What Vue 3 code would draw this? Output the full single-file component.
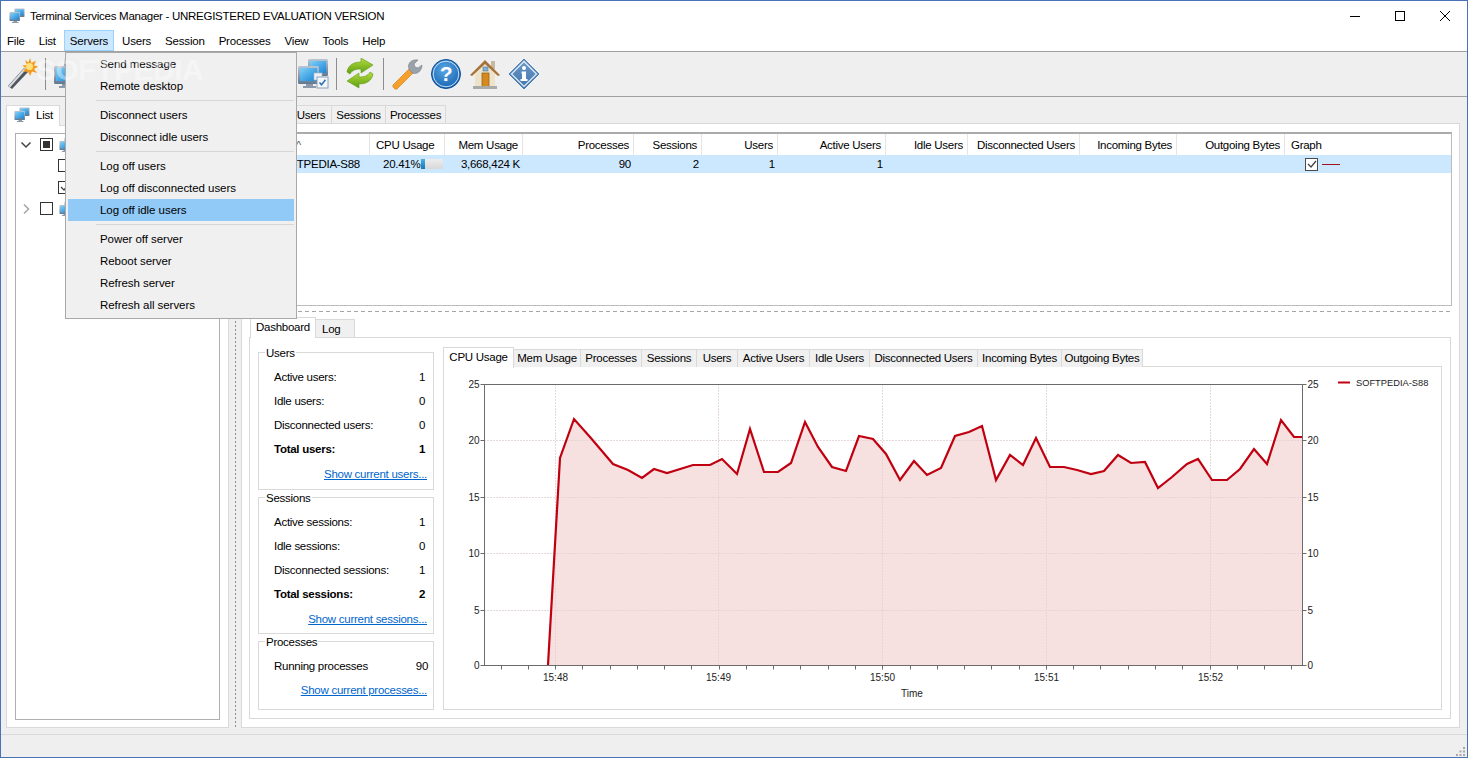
<template>
  <div class="window">
    <svg class="defs" width="0" height="0" aria-hidden="true">
      <defs>
        <linearGradient id="screen" x1="0" y1="0" x2="1" y2="1">
          <stop offset="0" stop-color="#7fd0f7" />
          <stop offset="1" stop-color="#1a86d8" />
        </linearGradient>
        <linearGradient id="bezel" x1="0" y1="0" x2="0" y2="1">
          <stop offset="0" stop-color="#b9c6d4" />
          <stop offset="1" stop-color="#62778e" />
        </linearGradient>
        <linearGradient id="green" x1="0" y1="0" x2="0" y2="1">
          <stop offset="0" stop-color="#b5dc3c" />
          <stop offset="1" stop-color="#5c9e12" />
        </linearGradient>
        <radialGradient id="blueball" cx="0.45" cy="0.35" r="0.75">
          <stop offset="0" stop-color="#5aa6e6" />
          <stop offset="1" stop-color="#0f5cab" />
        </radialGradient>
        <linearGradient id="diamond" x1="0" y1="0" x2="0" y2="1">
          <stop offset="0" stop-color="#6f9ccb" />
          <stop offset="1" stop-color="#3f74ab" />
        </linearGradient>
        <symbol id="pcs" viewBox="0 0 32 32">
          <rect x="11" y="1" width="20" height="17" rx="1.5" fill="url(#bezel)" />
          <rect x="13" y="3" width="16" height="12" fill="url(#screen)" />
          <rect x="1" y="8" width="21" height="18" rx="1.5" fill="url(#bezel)" />
          <rect x="3" y="10" width="17" height="13" fill="url(#screen)" />
          <path d="M9 26h7v2h3v2H6v-2h3z" fill="#8a9aaa" />
        </symbol>
      </defs>
    </svg>

    <header class="titlebar">
      <svg class="title-icon" width="16" height="16"><use href="#pcs" /></svg>
      <span class="title-text">Terminal Services Manager - UNREGISTERED EVALUATION VERSION</span>
      <div class="win-buttons">
        <div class="win-btn"><svg width="12" height="12"><path d="M1 6.5h10" stroke="#000" /></svg></div>
        <div class="win-btn"><svg width="12" height="12"><rect x="1.5" y="1.5" width="9" height="9" fill="none" stroke="#000" /></svg></div>
        <div class="win-btn"><svg width="12" height="12"><path d="M1 1l10 10M11 1L1 11" stroke="#000" /></svg></div>
      </div>
    </header>

    <nav class="menubar">
      <span v-for="m in menus" :key="m" class="menu-item" :class="{ open: m === 'Servers' }">{{ m }}</span>
    </nav>

    <div class="toolbar">
      <svg class="tool" width="32" height="32" viewBox="0 0 32 32">
        <path d="M2 28L18 10l4 4L6 31z" fill="#50565e" />
        <path d="M2.5 28L18 10.5l1.5 1.4L4 29.4z" fill="#d8dde2" />
        <path d="M24 0l1.500 5 4.500-2.500-2 5 4.500 1-4.500 2.500 3 4-5-1.500L24 18l-2-4.500-5 .5 3-4-4-2.500 5-.5L19 2l3.500 2.500z" fill="#f59a1c" />
        <circle cx="23.500" cy="8.500" r="3.500" fill="#ffe27a" />
      </svg>
      <span class="tool-sep"></span>
      <svg class="tool" width="32" height="32"><use href="#pcs" /></svg>
      <span class="tool-gap"></span>
      <svg class="tool" width="32" height="32" viewBox="0 0 32 32">
        <use href="#pcs" />
        <rect x="17" y="15" width="8" height="7" fill="#eef2f6" stroke="#a8b4c0" stroke-width=".6" />
        <rect x="20" y="19" width="11" height="11" fill="#f4f7fa" stroke="#8aa0b6" />
        <path d="M22.500 24.500l2 2.300 4-5" fill="none" stroke="#2a6fb5" stroke-width="1.500" />
      </svg>
      <span class="tool-sep"></span>
      <svg class="tool" width="32" height="32" viewBox="0 0 32 32">
        <path d="M3 14C4 7 10 4 17 4V0l12 7-12 8v-4c-5 0-9 1-11 5z" fill="url(#green)" stroke="#5f9a18" stroke-width=".6" />
        <path d="M29 16c-1 7-7 10-14 10v4L3 23l12-8v4c5 0 9-1 11-5z" fill="url(#green)" stroke="#5f9a18" stroke-width=".6" />
      </svg>
      <span class="tool-sep"></span>
      <svg class="tool" width="32" height="32" viewBox="0 0 32 32">
        <path d="M2 27L19 10l4 4L6 31c-2 1-5-2-4-4z" fill="#f5a02a" stroke="#c9791a" stroke-width=".6" />
        <path d="M18 11c-2-5 2-10 9-9l-4 4 1 3 3 1 4-3c0 6-5 10-10 8z" fill="#9aa1a8" stroke="#7b828a" stroke-width=".6" />
      </svg>
      <svg class="tool" width="32" height="32" viewBox="0 0 32 32">
        <circle cx="16" cy="16" r="14.500" fill="url(#blueball)" stroke="#0d4f98" />
        <circle cx="16" cy="16" r="12.800" fill="none" stroke="#d4e8f8" stroke-width=".9" />
        <text x="16" y="23" class="glyph" font-size="21" text-anchor="middle">?</text>
      </svg>
      <svg class="tool" width="32" height="32" viewBox="0 0 32 32">
        <rect x="22" y="3" width="4" height="8" fill="#c6b9a4" />
        <path d="M6 15L16 5l10 10v14H6z" fill="#ede3ca" />
        <path d="M1 17L16 2l15 15-2 1L16 6 3 18z" fill="#a5703a" />
        <rect x="13" y="15" width="7" height="14" fill="#d68a1c" stroke="#8a5a1c" stroke-width=".7" />
        <rect x="14" y="9" width="5" height="4" fill="#7fb0d8" stroke="#5f7d99" stroke-width=".6" />
        <rect x="4" y="28" width="24" height="3" fill="#a9aca6" />
      </svg>
      <svg class="tool" width="32" height="32" viewBox="0 0 32 32">
        <path d="M16 1l15 15-15 15L1 16z" fill="url(#diamond)" stroke="#4d7fb3" />
        <path d="M16 3.500L28.500 16 16 28.500 3.500 16z" fill="none" stroke="#e6eff7" stroke-width="1.200" />
        <circle cx="16" cy="10" r="2" fill="#fff" />
        <path d="M13.500 13.500H18V21h1.500v2h-7v-2H14v-5.500h-.5z" fill="#fff" />
      </svg>
    </div>

    <main class="workspace">
      <section class="left-col">
        <div class="tab-strip">
          <div class="tab active list-tab">
            <svg width="16" height="16"><use href="#pcs" /></svg>
            <span>List</span>
          </div>
        </div>
        <div class="left-panel">
          <div class="tree">
            <div class="tree-row">
              <svg class="chev" width="12" height="12"><path d="M1.500 3.500L6 8l4.500-4.500" fill="none" stroke="#444" stroke-width="1.500" /></svg>
              <span class="check mixed"></span>
              <svg class="tree-pc" width="16" height="16"><use href="#pcs" /></svg>
            </div>
            <div class="tree-row child">
              <span class="check"></span>
            </div>
            <div class="tree-row child">
              <span class="check">
                <svg width="10" height="10"><path d="M1 5l3 3 5-6" fill="none" stroke="#444" stroke-width="1.300" /></svg>
              </span>
            </div>
            <div class="tree-row">
              <svg class="chev" width="12" height="12"><path d="M4 1.500L8.500 6 4 10.500" fill="none" stroke="#a6a6a6" stroke-width="1.500" /></svg>
              <span class="check"></span>
              <svg class="tree-pc" width="16" height="16"><use href="#pcs" /></svg>
            </div>
          </div>
        </div>
      </section>

      <div class="v-splitter"></div>

      <section class="right-col">
        <div class="tab-strip top-tabs">
          <div class="tab active">Servers</div>
          <div class="tab">Users</div>
          <div class="tab">Sessions</div>
          <div class="tab">Processes</div>
        </div>
        <div class="right-panel">
          <div class="server-table">
            <div class="thead">
              <div v-for="c in columns" :key="c.label" class="th" :class="c.align">{{ c.label }}</div>
            </div>
            <div class="trow">
              <div class="td name">SOFTPEDIA-S88</div>
              <div class="td cpu">
                <span class="cpu-text">20.41%</span>
                <span class="cpu-bar"><span class="cpu-fill" :style="{ width: cpuUsage + '%' }"></span></span>
              </div>
              <div class="td right">3,668,424 K</div>
              <div class="td right">90</div>
              <div class="td right">2</div>
              <div class="td right">1</div>
              <div class="td right">1</div>
              <div class="td"></div>
              <div class="td"></div>
              <div class="td"></div>
              <div class="td"></div>
              <div class="td graph">
                <span class="check on-row">
                  <svg width="10" height="10"><path d="M1 5l3 3 5-6" fill="none" stroke="#444" stroke-width="1.300" /></svg>
                </span>
                <span class="graph-line"></span>
              </div>
            </div>
          </div>

          <div class="h-splitter"></div>

          <div class="tab-strip dash-tabs">
            <div class="tab active">Dashboard</div>
            <div class="tab log-tab">Log</div>
          </div>
          <div class="dash-panel">
            <div class="stats-col">
              <div v-for="g in groups" :key="g.title" class="group">
                <span class="group-title">{{ g.title }}</span>
                <div v-for="r in g.rows" :key="r.label" class="stat-row" :class="{ total: r.total }">
                  <span>{{ r.label }}</span>
                  <span class="stat-value">{{ r.value }}</span>
                </div>
                <div class="link-row"><a class="show-link">{{ g.link }}</a></div>
              </div>
            </div>

            <div class="chart-col">
              <div class="chart-tabs">
                <div v-for="(t, i) in chartTabs" :key="t" class="tab" :class="{ active: i === 0 }">{{ t }}</div>
              </div>
              <div class="chart-panel">
                <svg class="chart" width="999" height="343" viewBox="443 366 999 343">
                  <line v-for="y in [440.5, 497.5, 553.5, 610.5]" :key="y" :x1="plot.left" :x2="plot.right" :y1="y" :y2="y" class="grid" />
                  <line v-for="t in hours" :key="t.label" :x1="t.x" :x2="t.x" :y1="plot.top" :y2="plot.bottom" class="grid" />
                  <polygon :points="fillPoints" fill="#f6e0e0" />
                  <line v-for="y in [440.5, 497.5, 553.5, 610.5]" :key="'f' + y" :x1="plot.left" :x2="plot.right" :y1="y" :y2="y" class="grid over" />
                  <line v-for="t in hours" :key="'f' + t.label" :x1="t.x" :x2="t.x" :y1="plot.top" :y2="plot.bottom" class="grid over" />
                  <polyline :points="linePoints" fill="none" stroke="#c00010" stroke-width="2.200" />
                  <rect :x="plot.left" :y="plot.top" :width="plot.right - plot.left" :height="plot.bottom - plot.top" fill="none" stroke="#6b6b6b" />
                  <line v-for="x in minorTicks" :key="x" :x1="x" :x2="x" :y1="plot.bottom" :y2="plot.bottom + 4" stroke="#6b6b6b" />
                  <g v-for="l in yLabels" :key="l.v">
                    <line :x1="plot.left - 4" :x2="plot.left" :y1="l.y" :y2="l.y" stroke="#6b6b6b" />
                    <line :x1="plot.right" :x2="plot.right + 4" :y1="l.y" :y2="l.y" stroke="#6b6b6b" />
                    <text :x="plot.left - 5" :y="l.y + 3.500" text-anchor="end" class="axis-text">{{ l.v }}</text>
                    <text :x="plot.right + 5" :y="l.y + 3.500" class="axis-text">{{ l.v }}</text>
                  </g>
                  <text v-for="t in hours" :key="'l' + t.label" :x="t.x" y="681" text-anchor="middle" class="axis-text">{{ t.label }}</text>
                  <text x="912" y="697" text-anchor="middle" class="axis-text">Time</text>
                  <line x1="1338" x2="1350" y1="382.500" y2="382.500" stroke="#c00010" stroke-width="2" />
                  <text x="1356" y="386" class="legend-text">SOFTPEDIA-S88</text>
                </svg>
              </div>
            </div>
          </div>
        </div>
      </section>
    </main>

    <footer class="statusbar">
      <svg class="grip" width="9" height="9">
        <rect x="7" y="0" width="2" height="2" />
        <rect x="3.500" y="3.500" width="2" height="2" />
        <rect x="7" y="3.500" width="2" height="2" />
        <rect x="0" y="7" width="2" height="2" />
        <rect x="3.500" y="7" width="2" height="2" />
        <rect x="7" y="7" width="2" height="2" />
      </svg>
    </footer>

    <!-- Servers dropdown, lies over the toolbar and the panels -->
    <div class="dropdown">
      <template v-for="(item, i) in serverMenu" :key="i">
        <div v-if="item === '-'" class="dd-sep"></div>
        <div v-else class="dd-item" :class="{ hover: item === 'Log off idle users' }">{{ item }}</div>
      </template>
    </div>
    <span class="watermark">SOFTPEDIA</span>
  </div>
</template>

<script setup>
import { computed } from 'vue'

const menus = ['File', 'List', 'Servers', 'Users', 'Session', 'Processes', 'View', 'Tools', 'Help']

const serverMenu = [
  'Send message', 'Remote desktop', '-',
  'Disconnect users', 'Disconnect idle users', '-',
  'Log off users', 'Log off disconnected users', 'Log off idle users', '-',
  'Power off server', 'Reboot server', 'Refresh server', 'Refresh all servers',
]

const columns = [
  { label: '^', align: 'sort' },
  { label: 'CPU Usage', align: 'left' },
  { label: 'Mem Usage', align: 'right' },
  { label: 'Processes', align: 'right' },
  { label: 'Sessions', align: 'right' },
  { label: 'Users', align: 'right' },
  { label: 'Active Users', align: 'right' },
  { label: 'Idle Users', align: 'right' },
  { label: 'Disconnected Users', align: 'right' },
  { label: 'Incoming Bytes', align: 'right' },
  { label: 'Outgoing Bytes', align: 'right' },
  { label: 'Graph', align: 'left graph-head' },
]

const cpuUsage = 20.41

const groups = [
  {
    title: 'Users',
    rows: [
      { label: 'Active users:', value: 1 },
      { label: 'Idle users:', value: 0 },
      { label: 'Disconnected users:', value: 0 },
      { label: 'Total users:', value: 1, total: true },
    ],
    link: 'Show current users...',
  },
  {
    title: 'Sessions',
    rows: [
      { label: 'Active sessions:', value: 1 },
      { label: 'Idle sessions:', value: 0 },
      { label: 'Disconnected sessions:', value: 1 },
      { label: 'Total sessions:', value: 2, total: true },
    ],
    link: 'Show current sessions...',
  },
  {
    title: 'Processes',
    rows: [{ label: 'Running processes', value: 90 }],
    link: 'Show current processes...',
  },
]

const chartTabs = [
  'CPU Usage', 'Mem Usage', 'Processes', 'Sessions', 'Users', 'Active Users',
  'Idle Users', 'Disconnected Users', 'Incoming Bytes', 'Outgoing Bytes',
]

const plot = { left: 484.5, right: 1302.5, top: 384.5, bottom: 665.5 }

const yLabels = [
  { v: 25, y: 384.5 }, { v: 20, y: 440.5 }, { v: 15, y: 497.5 },
  { v: 10, y: 553.5 }, { v: 5, y: 610.5 }, { v: 0, y: 665.5 },
]

const hours = [
  { label: '15:48', x: 555.5 }, { label: '15:49', x: 718.5 }, { label: '15:50', x: 882.5 },
  { label: '15:51', x: 1046.5 }, { label: '15:52', x: 1210.5 },
]

// one tick every 10 seconds
const minorTicks = computed(() => {
  const out = []
  for (let x = 500.5; x < plot.right; x += 27.27) out.push(Math.round(x) + 0.5)
  return out
})

const samples = [
  [548, 665], [560, 458], [574, 419], [590, 437], [613, 464], [628, 470], [642, 478], [654, 469],
  [667, 473], [693, 465], [710, 465], [722, 459], [737, 474], [750, 429], [764, 472], [778, 472],
  [791, 463], [805, 422], [818, 447], [832, 467], [846, 471], [859, 436], [873, 439], [886, 454],
  [900, 480], [914, 461], [927, 475], [941, 468], [955, 436], [969, 432], [982, 426], [996, 480],
  [1010, 455], [1023, 465], [1036, 438], [1050, 467], [1064, 467], [1077, 470], [1091, 474], [1104, 471],
  [1118, 455], [1131, 463], [1145, 462], [1158, 488], [1172, 477], [1187, 464], [1198, 459], [1212, 480],
  [1227, 480], [1240, 469], [1254, 449], [1267, 464], [1281, 420], [1294, 437], [1302, 437],
]

const linePoints = computed(() => samples.map((p) => p.join(',')).join(' '))
const fillPoints = computed(() => `${linePoints.value} 1302,665 548,665`)
</script>

<style scoped>
.window {
  position: relative;
  box-sizing: border-box;
  width: 1468px;
  height: 758px;
  display: flex;
  flex-direction: column;
  overflow: hidden;
  background: #efefef;
  border: 1px solid #4a72b8;
  font-family: "Liberation Sans", Arial, sans-serif;
  font-size: 11.5px;
  letter-spacing: -0.27px;
  color: #000;
}

.defs { position: absolute; }

.titlebar {
  height: 29px;
  flex: none;
  display: flex;
  align-items: center;
  background: #fff;
  padding-left: 8px;
}

.title-icon { flex: none; }
.title-text { margin-left: 5px; }

.win-buttons {
  margin-left: auto;
  display: flex;
  margin-right: 0;
}

.win-btn {
  width: 45px;
  display: flex;
  justify-content: center;
}

.menubar {
  height: 21px;
  flex: none;
  display: flex;
  align-items: stretch;
  background: #fff;
}

.menu-item {
  display: flex;
  align-items: center;
  padding: 0 5px;
  margin: 0 1px;
  border: 1px solid transparent;
  letter-spacing: -0.2px;
}

.menu-item:first-child { margin-left: 0; }

.menu-item.open {
  background: #cce8ff;
  border-color: #99d1ff;
}

.toolbar {
  height: 44px;
  flex: none;
  display: flex;
  align-items: center;
  box-sizing: content-box;
  padding-left: 5px;
  border-top: 1px solid #a0a0a0;
  border-bottom: 1px solid #a0a0a0;
}

.tool { flex: none; margin-right: 7px; }

.tool-sep {
  width: 1px;
  height: 32px;
  margin-right: 7px;
  background: #8c8c8c;
  flex: none;
}

.tool-gap { width: 205px; flex: none; }

.glyph {
  font-family: "Liberation Sans", Arial, sans-serif;
  font-weight: 700;
  fill: #fff;
}

.workspace {
  flex: 1;
  min-height: 0;
  display: flex;
  padding: 6px 7px 6px 5px;
  box-sizing: border-box;
}

.left-col {
  width: 223px;
  flex: none;
  display: flex;
  flex-direction: column;
}

.tab-strip {
  display: flex;
  align-items: flex-end;
  height: 22px;
  flex: none;
}

.tab {
  position: relative;
  box-sizing: border-box;
  display: flex;
  align-items: center;
  justify-content: center;
  height: 18px;
  background: #f0f0f0;
  border: 1px solid #d9d9d9;
  border-left: 0;
  border-bottom: 0;
  padding: 0 4px;
  white-space: nowrap;
}

.tab.active {
  background: #fff;
  height: 21px;
  border-left: 1px solid #d9d9d9;
  margin-bottom: -1px;
  padding-bottom: 2px;
  z-index: 1;
}

.list-tab {
  width: 54px;
  height: 23px;
  gap: 6px;
  padding: 0 0 0 7px;
  justify-content: flex-start;
}

.left-panel {
  flex: 1;
  min-height: 0;
  box-sizing: border-box;
  background: #fff;
  border: 1px solid #d9d9d9;
  padding: 7px 8px;
}

.tree {
  box-sizing: border-box;
  height: 100%;
  background: #fff;
  border: 1px solid #b0b0b0;
}

.tree-row {
  height: 21.3px;
  display: flex;
  align-items: center;
  padding-left: 4px;
}

.tree-row.child { padding-left: 42px; }

.chev { flex: none; margin-right: 8px; }

.check {
  box-sizing: border-box;
  flex: none;
  width: 13px;
  height: 13px;
  display: flex;
  align-items: center;
  justify-content: center;
  background: #fff;
  border: 1px solid #333;
}

.check.mixed::after {
  content: '';
  width: 7px;
  height: 7px;
  background: #333;
}

.tree-pc { flex: none; margin-left: 6px; }

.v-splitter {
  width: 12px;
  flex: none;
  margin: 22px 0 0;
  background: repeating-linear-gradient(to bottom, #8c8c8c 0 2px, transparent 2px 4px) center / 1px 100% no-repeat;
}

.right-col {
  flex: 1;
  min-width: 0;
  display: flex;
  flex-direction: column;
}

.top-tabs { height: 20px; }
.top-tabs .tab:nth-child(1) { width: 50px; }
.top-tabs .tab:nth-child(2) { width: 41px; }
.top-tabs .tab:nth-child(3) { width: 54px; }
.top-tabs .tab:nth-child(4) { width: 60px; }

.right-panel {
  flex: 1;
  min-height: 0;
  box-sizing: border-box;
  background: #fff;
  border: 1px solid #d9d9d9;
  padding: 8px 7px;
  display: flex;
  flex-direction: column;
}

.server-table {
  box-sizing: border-box;
  height: 174px;
  flex: none;
  border: 1px solid #bcbcbc;
  border-top: 2px solid #ababab;
}

.thead,
.trow {
  display: grid;
  grid-template-columns: 120px 75px 78px 111px 68px 76px 108px 82px 112px 97px 108px 1fr;
}

.thead { height: 21px; }

.th {
  box-sizing: border-box;
  display: flex;
  align-items: center;
  border-right: 1px solid #e5e5e5;
  padding: 0 4px 0 6px;
  white-space: nowrap;
}

.th.right { justify-content: flex-end; }
.th.sort { padding-left: 46px; color: #555; font-size: 11px; }
.th.graph-head { border-right: 0; }

.trow {
  height: 18px;
  background: #cce8ff;
}

.td {
  display: flex;
  align-items: center;
  padding-right: 3px;
  white-space: nowrap;
}

.td.right { justify-content: flex-end; }
.td.name { justify-content: flex-end; padding-right: 10px; }
.td.cpu { padding-left: 13px; }
.cpu-text { width: 38px; flex: none; }

.cpu-bar {
  width: 22px;
  height: 10px;
  display: block;
  flex: none;
  background: linear-gradient(to bottom, #ededed, #d8d8d8);
}

.cpu-fill {
  display: block;
  height: 100%;
  background: linear-gradient(to bottom, #4fb0e0, #0f78b8);
}

.td.graph { padding-left: 20px; gap: 4px; }
.check.on-row { border-color: #4a4a4a; }

.graph-line {
  width: 18px;
  height: 1px;
  background: #a3121f;
}

.h-splitter {
  height: 12px;
  flex: none;
  background: repeating-linear-gradient(to right, #a6a6a6 0 4px, transparent 4px 7px) 0 5px / 100% 1px no-repeat;
}

.dash-tabs {
  height: 19px;
  padding-left: 1px;
}

.dash-tabs .tab.active { width: 66px; }
.log-tab { width: 39px; justify-content: flex-start; padding-left: 6px; }

.dash-panel {
  flex: 1;
  min-height: 0;
  box-sizing: border-box;
  margin-right: 1px;
  border: 1px solid #d9d9d9;
  padding: 9px 8px 8px 8px;
  display: flex;
  gap: 9px;
}

.stats-col {
  width: 176px;
  flex: none;
  margin-top: 5px;
  display: flex;
  flex-direction: column;
  gap: 7px;
}

.group {
  position: relative;
  box-sizing: border-box;
  border: 1px solid #d9d9d9;
  padding: 12px 0 0 15px;
  height: 138px;
}

.group:nth-child(2) { height: 137px; }
.group:last-child { height: 69px; }
.group:last-child .link-row { height: 24px; }

.group-title {
  position: absolute;
  top: -7px;
  left: 6px;
  padding: 0 1px;
  line-height: 14px;
  background: #fff;
}

.stat-row {
  height: 24px;
  display: flex;
  align-items: center;
  justify-content: space-between;
}

.stat-row.total { font-weight: 700; }

.stat-value {
  width: 20px;
  margin-right: 1px;
  text-align: center;
}

.link-row {
  height: 25px;
  display: flex;
  align-items: center;
  justify-content: flex-end;
  padding-right: 6px;
}

.show-link {
  color: #0066cc;
  text-decoration: underline;
}

.chart-col {
  flex: 1;
  min-width: 0;
  display: flex;
  flex-direction: column;
}

.chart-tabs {
  height: 19px;
  flex: none;
  display: grid;
  grid-template-columns: 71px 67px 61px 55px 41px 72px 60px 108px 84px 81px;
  justify-content: start;
  align-items: end;
}

.chart-tabs .tab:not(.active) { padding-bottom: 1px; }

.chart-panel {
  box-sizing: border-box;
  width: 999px;
  height: 344px;
  border: 1px solid #d9d9d9;
  overflow: hidden;
}

.chart {
  display: block;
  margin: -1px 0 0 -1px;
}

.grid {
  stroke: #d4d4d4;
  stroke-dasharray: 1 2;
}

.grid.over { stroke: #dcc8c8; }

.axis-text {
  font-family: "Liberation Sans", Arial, sans-serif;
  font-size: 10px;
  letter-spacing: 0;
  fill: #222;
}

.legend-text {
  font-family: "Liberation Sans", Arial, sans-serif;
  font-size: 9.300px;
  letter-spacing: 0;
  fill: #222;
}

.statusbar {
  height: 23px;
  flex: none;
  box-sizing: border-box;
  border-top: 1px solid #d9d9d9;
  display: flex;
  justify-content: flex-end;
  align-items: flex-end;
  padding: 0 2px 1px 0;
}

.grip { fill: #a8a8a8; }

.dropdown {
  position: absolute;
  left: 64px;
  top: 51px;
  width: 232px;
  box-sizing: border-box;
  padding: 0 2px 2px;
  background: #f0f0f0;
  border: 1px solid #a9a9a9;
  z-index: 5;
}

.dd-item {
  height: 22px;
  display: flex;
  align-items: center;
  padding-left: 32px;
  letter-spacing: -0.05px;
}

.dd-item.hover { background: #91c9f7; }

.dd-sep {
  height: 7px;
  margin-left: 28px;
  background: linear-gradient(#d7d7d7, #d7d7d7) center / 100% 1px no-repeat;
}

.watermark {
  position: absolute;
  left: 35px;
  top: 52px;
  z-index: 6;
  font-size: 30px;
  font-weight: 700;
  letter-spacing: -0.5px;
  color: rgba(255, 255, 255, 0.4);
  pointer-events: none;
}
</style>

<style>
html, body {
  margin: 0;
  padding: 0;
}
</style>
